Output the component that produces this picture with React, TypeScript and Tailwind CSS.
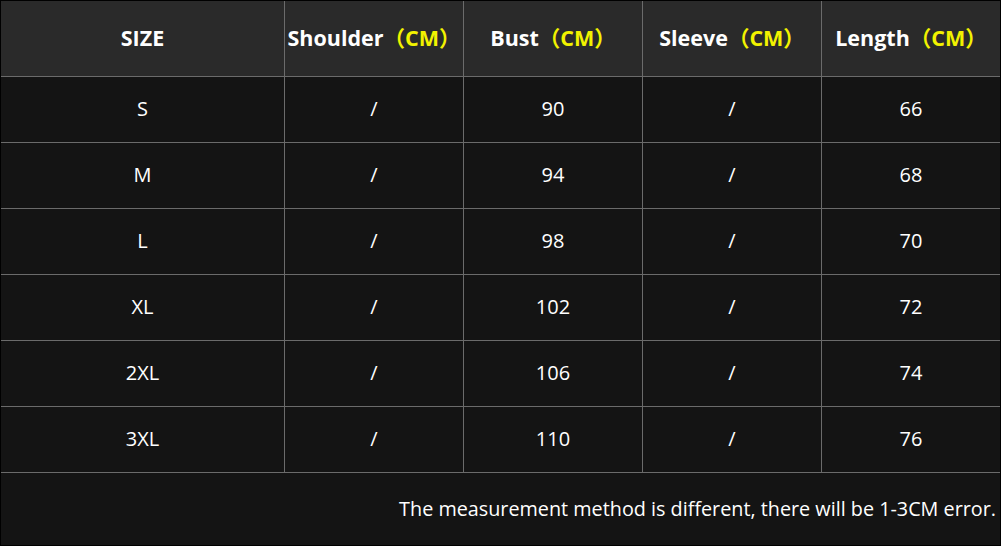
import React from 'react';

const rows = [
  ['S', '/', '90', '/', '66'],
  ['M', '/', '94', '/', '68'],
  ['L', '/', '98', '/', '70'],
  ['XL', '/', '102', '/', '72'],
  ['2XL', '/', '106', '/', '74'],
  ['3XL', '/', '110', '/', '76'],
];

const headers = ['Shoulder', 'Bust', 'Sleeve', 'Length'];

const App: React.FC = () => {
  return (
    <div
      className="w-[1001px] h-[546px] bg-black p-px"
      style={{ fontFamily: '"Open Sans", "Noto Sans CJK SC", sans-serif' }}
    >
      <div className="grid grid-cols-[283px_178px_178px_178px_178px] grid-rows-[75px_repeat(6,65px)_72px] gap-px bg-[#6b6b6b]">
        <div className="bg-[#2a2a2a] flex items-center justify-center text-white text-[21.5px] font-bold">
          SIZE
        </div>
        {headers.map((h) => (
          <div
            key={h}
            className="bg-[#2a2a2a] flex items-center justify-center text-white text-[21.5px] font-bold whitespace-nowrap"
          >
            {h}
            <span className="text-[#f2f200]">（CM）</span>
          </div>
        ))}
        {rows.map((r) =>
          r.map((cell, i) => (
            <div
              key={r[0] + i}
              className="bg-[#141414] flex items-center justify-center pb-[2px] text-white text-[20px]"
            >
              {cell}
            </div>
          ))
        )}
        <div className="col-span-5 bg-[#141414] flex items-center justify-end pr-[4px] text-white text-[19.8px]">
          The measurement method is different, there will be 1-3CM error.
        </div>
      </div>
    </div>
  );
};

export default App;
